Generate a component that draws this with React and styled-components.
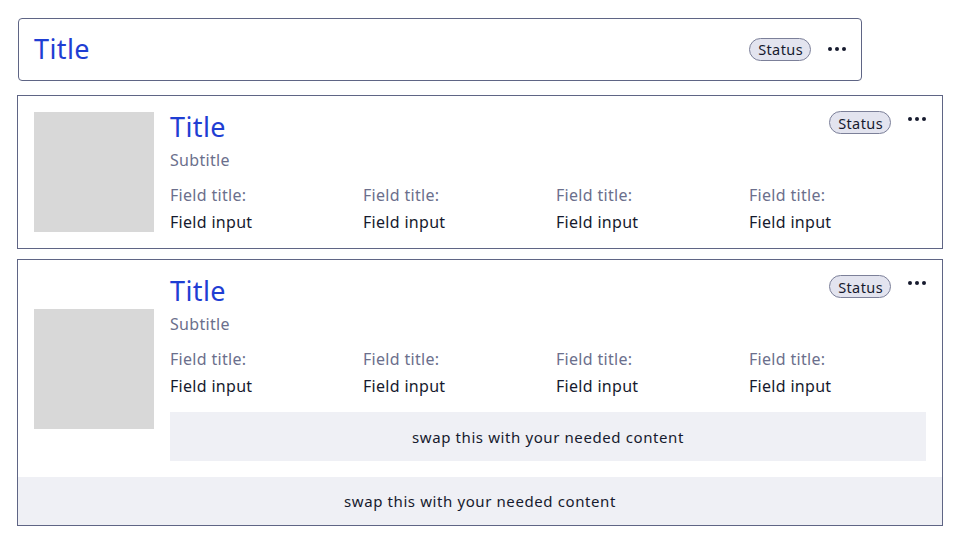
import React from "react";
import styled, { createGlobalStyle } from "styled-components";

const GlobalStyle = createGlobalStyle`
  body {
    margin: 0;
    background: #ffffff;
    font-family: "Noto Sans", "Open Sans", sans-serif;
    color: #161a2e;
  }
`;

const Page = styled.div`
  padding: 18px 17px;
  display: flex;
  flex-direction: column;
  align-items: flex-start;
`;

const Card = styled.div`
  box-sizing: border-box;
  width: ${(p) => p.$width}px;
  margin-left: ${(p) => p.$offset || 0}px;
  margin-top: ${(p) => p.$gap || 0}px;
  border: 1px solid #5f6585;
  border-radius: ${(p) => (p.$rounded ? "4px" : "0")};
  background: #fff;
`;

const Compact = styled.div`
  display: flex;
  align-items: center;
  justify-content: space-between;
  height: 61px;
  padding: 0 15px 1px 15px;
  box-sizing: border-box;
`;

const Body = styled.div`
  display: flex;
  align-items: center;
  gap: 16px;
  padding: 16px;
`;

const Thumb = styled.div`
  width: 120px;
  height: 120px;
  flex-shrink: 0;
  background: #d8d8d8;
`;

const Content = styled.div`
  flex: 1;
  min-width: 0;
  display: flex;
  flex-direction: column;
`;

const Head = styled.div`
  display: flex;
  justify-content: space-between;
  align-items: flex-start;
`;

const Title = styled.div`
  font-size: 27px;
  line-height: 30px;
  color: #1f3ed3;
  letter-spacing: 0.4px;
`;

const Actions = styled.div`
  display: flex;
  align-items: ${(p) => (p.$top ? "flex-start" : "center")};
  gap: 17px;
  margin-top: ${(p) => (p.$top ? "-1px" : "0")};
`;

const Badge = styled.span`
  box-sizing: border-box;
  height: 23px;
  padding: 0 7px 0 8px;
  display: inline-flex;
  align-items: center;
  border: 1px solid #7c8099;
  border-radius: 12px;
  background: #e3e4ef;
  font-size: 14.5px;
  letter-spacing: 0.4px;
  color: #161a2e;
`;

const Dots = styled.span`
  display: inline-flex;
  gap: 3px;
  margin-top: ${(p) => p.$offset || 0}px;
  span {
    width: 4px;
    height: 4px;
    border-radius: 50%;
    background: #161a2e;
  }
`;

const Subtitle = styled.div`
  margin-top: 8px;
  font-size: 16px;
  line-height: 20px;
  color: #6b6f8c;
  letter-spacing: 0.3px;
`;

const Fields = styled.div`
  margin-top: 15px;
  display: grid;
  grid-template-columns: 193px 193px 193px 1fr;
`;

const Field = styled.div`
  display: flex;
  flex-direction: column;
  gap: 7px;
`;

const FieldTitle = styled.div`
  font-size: 16px;
  line-height: 20px;
  color: #6b6f8c;
  letter-spacing: 0.3px;
`;

const FieldInput = styled.div`
  font-size: 16px;
  line-height: 20px;
  color: #161a2e;
  letter-spacing: 0.3px;
`;

const Slot = styled.div`
  height: ${(p) => p.$height}px;
  margin-top: ${(p) => p.$gap || 0}px;
  display: flex;
  align-items: center;
  justify-content: center;
  background: #eff0f5;
  font-size: 15px;
  letter-spacing: 0.6px;
  color: #161a2e;
`;

function More({ offset }) {
  return (
    <Dots $offset={offset}>
      <span />
      <span />
      <span />
    </Dots>
  );
}

function Detail({ extra }) {
  const cols = [1, 2, 3, 4];
  return (
    <Content>
      <Head>
        <Title>Title</Title>
        <Actions $top>
          <Badge>Status</Badge>
          <More offset={6} />
        </Actions>
      </Head>
      <Subtitle>Subtitle</Subtitle>
      <Fields>
        {cols.map((c) => (
          <Field key={c}>
            <FieldTitle>Field title:</FieldTitle>
            <FieldInput>Field input</FieldInput>
          </Field>
        ))}
      </Fields>
      {extra && (
        <Slot $height={49} $gap={16}>
          swap this with your needed content
        </Slot>
      )}
    </Content>
  );
}

export default function App() {
  return (
    <>
      <GlobalStyle />
      <Page>
        <Card $width={844} $offset={1} $rounded>
          <Compact>
            <Title>Title</Title>
            <Actions>
              <Badge>Status</Badge>
              <More />
            </Actions>
          </Compact>
        </Card>
        <Card $width={926} $gap={14}>
          <Body>
            <Thumb />
            <Detail />
          </Body>
        </Card>
        <Card $width={926} $gap={10}>
          <Body>
            <Thumb />
            <Detail extra />
          </Body>
          <Slot $height={48}>swap this with your needed content</Slot>
        </Card>
      </Page>
    </>
  );
}
